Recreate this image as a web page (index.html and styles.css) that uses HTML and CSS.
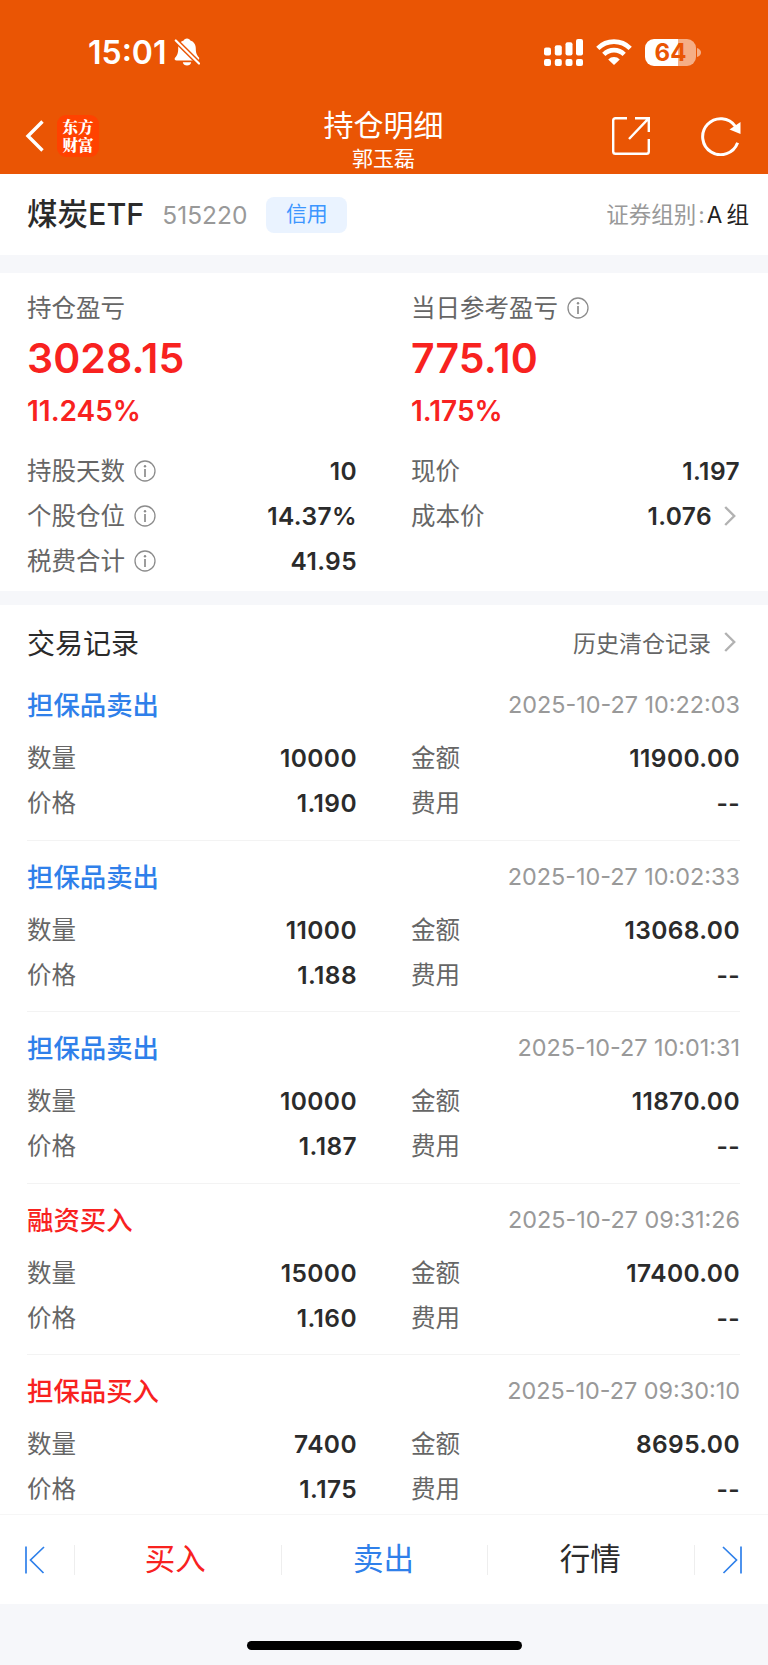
FILE: index.html
```html
<!DOCTYPE html>
<html lang="zh">
<head>
<meta charset="UTF-8">
<meta name="viewport" content="width=device-width, initial-scale=1.0">
<title>持仓明细</title>
<link rel="stylesheet" href="styles.css">
</head>
<body>

<!-- 公用图标 -->
<svg class="symbols" width="0" height="0">
  <symbol id="info" viewBox="0 0 22 22">
    <circle cx="11" cy="11" r="10" fill="none" stroke="#8c8c8c" stroke-width="1.3"/>
    <circle cx="11" cy="6.2" r="1.2" fill="#8c8c8c"/>
    <path d="M11 9v8" stroke="#8c8c8c" stroke-width="1.7"/>
  </symbol>
  <symbol id="arrow" viewBox="0 0 12 20">
    <path d="M1.2 1L10.2 10L1.2 19" fill="none" stroke="#b2b2b2" stroke-width="2.4"/>
  </symbol>
</svg>

<header class="header">
  <div class="status-bar">
    <div class="status-left">
      <span class="time">15:01</span>
      <svg width="26" height="28" viewBox="0 0 26 28">
        <path d="M13 0.5C14.8 0.5 16 1.6 16.3 2.6C19.8 3.6 21.8 6.7 21.8 10.4C21.8 15.2 22.8 16.8 25 19.5C25.6 21 25 22.5 23.2 22.5H2.6C0.9 22.5 0.1 21.2 1 19.8C3.3 17 4.2 15.2 4.2 10.4C4.2 6.7 6.3 3.6 9.7 2.6C10 1.6 11.2 0.5 13 0.5Z" fill="#fff"/>
        <path d="M8.8 24.2H17.2C16.7 26.4 15.2 27.5 13 27.5C10.8 27.5 9.3 26.4 8.8 24.2Z" fill="#fff"/>
        <path d="M0 0.7L27 27.5" stroke="#ea5504" stroke-width="5"/>
        <path d="M1.8 2.5L25 25.5" stroke="#fff" stroke-width="2.2" stroke-linecap="round"/>
      </svg>
    </div>
    <div class="status-right">
      <svg width="39" height="27" viewBox="0 0 39 27" fill="#fff">
        <rect x="0" y="8.5" width="7" height="8" rx="2"/>
        <rect x="10.8" y="6.2" width="7" height="10.3" rx="2"/>
        <rect x="21.5" y="3.2" width="7" height="13.3" rx="2"/>
        <rect x="32" y="0" width="7" height="16.5" rx="2"/>
        <rect x="0" y="20" width="7" height="7" rx="2"/>
        <rect x="10.8" y="20" width="7" height="7" rx="2"/>
        <rect x="21.5" y="20" width="7" height="7" rx="2"/>
        <rect x="32" y="20" width="7" height="7" rx="2"/>
      </svg>
      <svg class="wifi" width="36" height="26" viewBox="0 0 36 26">
        <path d="M1.8 9.3A23 23 0 0 1 34.2 9.3" fill="none" stroke="#fff" stroke-width="4.6"/>
        <path d="M7.8 15.3A14.5 14.5 0 0 1 28.2 15.3" fill="none" stroke="#fff" stroke-width="4.6"/>
        <path d="M12.2 20.4A8.2 8.2 0 0 1 23.8 20.4L18 26Z" fill="#fff"/>
      </svg>
      <div class="battery"><span>64</span></div>
      <svg class="battery-tip" width="4" height="9" viewBox="0 0 4 9"><path d="M0 0Q4 1.5 4 4.5Q4 7.5 0 9Z" fill="#f5ae86"/></svg>
    </div>
  </div>

  <div class="nav-bar">
    <div class="nav-left">
      <svg width="19" height="32" viewBox="0 0 19 32"><path d="M17.5 1.5L3 16L17.5 30.5" fill="none" stroke="#fff" stroke-width="3.4"/></svg>
      <div class="logo"><span>东方</span><span>财富</span></div>
    </div>
    <div class="nav-title">
      <h1>持仓明细</h1>
      <p>郭玉磊</p>
    </div>
    <div class="nav-right">
      <svg width="40" height="40" viewBox="0 0 40 40" fill="none" stroke="#fff" stroke-width="2.4">
        <path d="M16 2.2H4.5Q2.2 2.2 2.2 4.5V35.5Q2.2 37.8 4.5 37.8H35.5Q37.8 37.8 37.8 35.5V23"/>
        <path d="M24 2.2H37.8V16M37.4 2.6L18 23"/>
      </svg>
      <svg width="42" height="40" viewBox="0 0 42 40">
        <path d="M37.6 26.8A18 18 0 1 1 35.5 10.5" fill="none" stroke="#fff" stroke-width="3"/>
        <path d="M40.5 6V18L29.5 13.5Z" fill="#fff"/>
      </svg>
    </div>
  </div>
</header>

<!-- 证券名称 -->
<section class="stock">
  <span class="stock-name">煤炭ETF</span>
  <span class="stock-code">515220</span>
  <span class="stock-tag">信用</span>
  <span class="stock-group">证券组别<i>:</i><b>A 组</b></span>
</section>

<!-- 持仓概况 -->
<section class="summary">
  <div class="column">
    <div class="label">持仓盈亏</div>
    <div class="profit">3028.15</div>
    <div class="percent">11.245%</div>
    <div class="row"><span class="label">持股天数<svg class="info"><use href="#info"/></svg></span><span class="value">10</span></div>
    <div class="row"><span class="label">个股仓位<svg class="info"><use href="#info"/></svg></span><span class="value">14.37%</span></div>
    <div class="row"><span class="label">税费合计<svg class="info"><use href="#info"/></svg></span><span class="value">41.95</span></div>
  </div>
  <div class="column">
    <div class="label">当日参考盈亏<svg class="info"><use href="#info"/></svg></div>
    <div class="profit">775.10</div>
    <div class="percent">1.175%</div>
    <div class="row"><span class="label">现价</span><span class="value">1.197</span></div>
    <div class="row"><span class="label">成本价</span><span class="value">1.076<svg class="arrow"><use href="#arrow"/></svg></span></div>
  </div>
</section>

<!-- 交易记录 -->
<section class="records">
  <div class="records-head">
    <h2>交易记录</h2>
    <span class="history">历史清仓记录<svg class="arrow"><use href="#arrow"/></svg></span>
  </div>

  <div class="record">
    <div class="record-title"><span class="type sell">担保品卖出</span><span class="date">2025-10-27 10:22:03</span></div>
    <div class="record-grid">
      <div class="row"><span class="label">数量</span><span class="value">10000</span></div>
      <div class="row"><span class="label">金额</span><span class="value">11900.00</span></div>
      <div class="row"><span class="label">价格</span><span class="value">1.190</span></div>
      <div class="row"><span class="label">费用</span><span class="value">--</span></div>
    </div>
  </div>

  <div class="record">
    <div class="record-title"><span class="type sell">担保品卖出</span><span class="date">2025-10-27 10:02:33</span></div>
    <div class="record-grid">
      <div class="row"><span class="label">数量</span><span class="value">11000</span></div>
      <div class="row"><span class="label">金额</span><span class="value">13068.00</span></div>
      <div class="row"><span class="label">价格</span><span class="value">1.188</span></div>
      <div class="row"><span class="label">费用</span><span class="value">--</span></div>
    </div>
  </div>

  <div class="record">
    <div class="record-title"><span class="type sell">担保品卖出</span><span class="date">2025-10-27 10:01:31</span></div>
    <div class="record-grid">
      <div class="row"><span class="label">数量</span><span class="value">10000</span></div>
      <div class="row"><span class="label">金额</span><span class="value">11870.00</span></div>
      <div class="row"><span class="label">价格</span><span class="value">1.187</span></div>
      <div class="row"><span class="label">费用</span><span class="value">--</span></div>
    </div>
  </div>

  <div class="record">
    <div class="record-title"><span class="type buy">融资买入</span><span class="date">2025-10-27 09:31:26</span></div>
    <div class="record-grid">
      <div class="row"><span class="label">数量</span><span class="value">15000</span></div>
      <div class="row"><span class="label">金额</span><span class="value">17400.00</span></div>
      <div class="row"><span class="label">价格</span><span class="value">1.160</span></div>
      <div class="row"><span class="label">费用</span><span class="value">--</span></div>
    </div>
  </div>

  <div class="record">
    <div class="record-title"><span class="type buy">担保品买入</span><span class="date">2025-10-27 09:30:10</span></div>
    <div class="record-grid">
      <div class="row"><span class="label">数量</span><span class="value">7400</span></div>
      <div class="row"><span class="label">金额</span><span class="value">8695.00</span></div>
      <div class="row"><span class="label">价格</span><span class="value">1.175</span></div>
      <div class="row"><span class="label">费用</span><span class="value">--</span></div>
    </div>
  </div>
</section>

<!-- 底部操作栏 -->
<nav class="actions">
  <a class="edge"><svg width="21" height="28" viewBox="0 0 21 28" fill="none" stroke="#2f80ea" stroke-width="1.7"><path d="M2 0.5V27.5M20 1L6.5 14L19.5 27"/></svg></a>
  <a class="buy">买入</a>
  <a class="sell">卖出</a>
  <a>行情</a>
  <a class="edge last"><svg width="21" height="28" viewBox="0 0 21 28" fill="none" stroke="#2f80ea" stroke-width="1.7"><path d="M19 0.5V27.5M1 1L14.5 14L1.5 27"/></svg></a>
</nav>

<footer class="home"><div class="home-bar"></div></footer>

</body>
</html>
```
FILE: styles.css
```css
* {
    box-sizing: border-box;
}

body {
    font-family: Inter, "Noto Sans CJK SC", sans-serif;
    background-color: #fff;
    color: #2b2b2b;
    margin: 0;
    height: 1665px;
    display: flex;
    flex-direction: column;
    overflow: hidden;
}

h1, h2, p {
    margin: 0;
    font-weight: normal;
}

svg {
    display: block;
    flex: none;
}

.symbols {
    position: absolute;
}

/* 顶部 */
.header {
    height: 174px;
    flex: none;
    background-color: #ea5504;
    color: #fff;
}

.status-bar {
    height: 104px;
    padding: 0 67px 0 88px;
    display: flex;
    justify-content: space-between;
    align-items: center;
}

.status-left, .status-right {
    display: flex;
    align-items: center;
}

.time {
    font-size: 32px;
    font-weight: 600;
    line-height: 36px;
    width: 86px;
    padding-top: 1px;
    white-space: nowrap;
}

.wifi {
    margin-left: 13px;
}

.battery {
    width: 51px;
    height: 27px;
    margin-left: 13px;
    border-radius: 9px;
    background: linear-gradient(90deg, #fff 64%, #f5ae86 64%);
    color: #ea5504;
    font-size: 24px;
    font-weight: 700;
    line-height: 27px;
    text-align: center;
}

.battery-tip {
    margin-left: 1px;
}

.nav-bar {
    height: 70px;
    padding: 0 26px 0 25px;
    display: grid;
    grid-template-columns: 1fr auto 1fr;
}

.nav-left, .nav-right {
    display: flex;
    align-items: center;
    height: 63px;
}

.nav-right {
    justify-content: flex-end;
    gap: 49px;
}

.logo {
    width: 42px;
    height: 42px;
    margin-left: 13px;
    border-radius: 9px;
    background-color: #ff4200;
    font-family: "Noto Serif CJK SC", "Noto Sans CJK SC", sans-serif;
    font-size: 15.5px;
    font-weight: 900;
    line-height: 18px;
    display: flex;
    flex-direction: column;
    align-items: center;
    padding-top: 2px;
}

.nav-title {
    text-align: center;
}

.nav-title h1 {
    font-size: 30px;
    line-height: 40px;
    padding-top: 1px;
}

.nav-title p {
    font-size: 21px;
    line-height: 28px;
}

/* 证券名称 */
.stock {
    height: 81px;
    flex: none;
    padding: 0 19px 0 27px;
    display: flex;
    align-items: center;
}

.stock-name {
    font-size: 30.5px;
    font-weight: 500;
    padding-bottom: 5px;
}

.stock-code {
    margin-left: 18px;
    font-size: 24.5px;
    color: #999;
}

.stock-tag {
    width: 81px;
    height: 36px;
    margin-left: 19px;
    border-radius: 8px;
    background-color: #eaf3ff;
    color: #3c96ff;
    font-size: 21px;
    line-height: 34px;
    text-align: center;
}

.stock-group {
    margin-left: auto;
    padding-bottom: 4px;
    font-size: 22.5px;
    color: #999;
}

.stock-group i {
    font-style: normal;
    padding: 0 2px;
}

.stock-group b {
    color: #222;
    font-weight: 400;
    word-spacing: -2px;
}

/* 持仓概况 */
.summary {
    height: 350px;
    flex: none;
    padding: 16px 28px 0 27px;
    border-top: 18px solid #f6f7fa;
    border-bottom: 14px solid #f6f7fa;
    display: grid;
    grid-template-columns: 330px 329px;
    column-gap: 54px;
    align-items: start;
}

.label {
    display: flex;
    align-items: center;
    height: 38px;
    font-size: 24.5px;
    line-height: 36px;
    color: #666;
}

.info {
    width: 22px;
    height: 22px;
    margin-left: 9px;
}

.arrow {
    width: 12px;
    height: 20px;
    margin-right: 4px;
}

.profit {
    font-size: 41px;
    font-weight: 600;
    line-height: 60px;
    padding-top: 1px;
    letter-spacing: 0.1px;
    color: #f8221f;
}

.percent {
    font-size: 28px;
    font-weight: 600;
    line-height: 44px;
    padding-top: 1px;
    margin-bottom: 15px;
    color: #f8221f;
}

.row {
    display: flex;
    justify-content: space-between;
    align-items: center;
    height: 45px;
}

.value {
    display: flex;
    align-items: center;
    gap: 12px;
    font-size: 24.5px;
    font-weight: 600;
    letter-spacing: 0.4px;
}

/* 交易记录 */
.records {
    flex: 1;
    min-height: 0;
    overflow: hidden;
    padding: 0 28px 0 27px;
}

.records-head {
    height: 64px;
    padding-top: 10px;
    display: flex;
    justify-content: space-between;
    align-items: center;
}

.records-head h2 {
    font-size: 28px;
}

.history {
    display: flex;
    align-items: center;
    gap: 13px;
    font-size: 23px;
    color: #666;
}

.record {
    height: 171.5px;
    padding-top: 13px;
    border-bottom: 1px solid #f3f3f3;
}

.record-title {
    height: 44px;
    margin-bottom: 9.5px;
    display: flex;
    justify-content: space-between;
    align-items: center;
}

.type {
    font-size: 26.4px;
    font-weight: 500;
    padding-bottom: 1px;
}

.date {
    font-size: 23.4px;
    padding-top: 1px;
    color: #999;
}

.sell {
    color: #2f80ea;
}

.buy {
    color: #f8221f;
}

.record-grid {
    display: grid;
    grid-template-columns: 330px 329px;
    column-gap: 54px;
}

/* 底部 */
.actions {
    height: 90px;
    flex: none;
    border-top: 1px solid #f6f6f6;
    display: grid;
    grid-template-columns: 75px 1fr 1fr 1fr 73px;
    align-items: center;
    font-size: 30.5px;
}

.actions a {
    height: 30px;
    line-height: 28px;
    padding-right: 2px;
    text-align: center;
    border-right: 1px solid #eee;
}

.actions .buy {
    padding-right: 5px;
}

.actions .edge {
    display: flex;
    align-items: center;
    padding-left: 24px;
}

.actions .last {
    padding-left: 27px;
    border-right: none;
}

.home {
    height: 61px;
    flex: none;
    padding-top: 37px;
    background-color: #f6f7fa;
}

.home-bar {
    width: 275px;
    height: 9px;
    margin: 0 auto;
    border-radius: 5px;
    background-color: #000;
}
```
